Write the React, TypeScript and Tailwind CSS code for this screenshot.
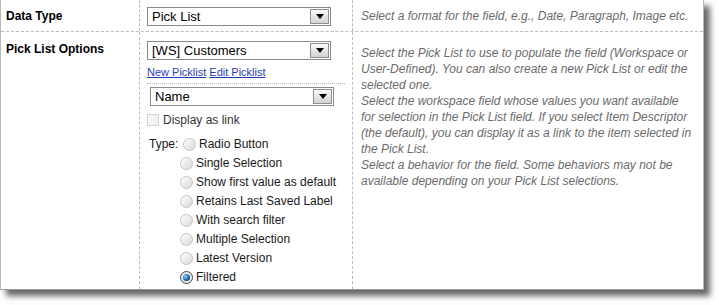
// Field options panel — Pick List settings (Data Type / Pick List Options)

const TYPES = [
  "Radio Button",
  "Single Selection",
  "Show first value as default",
  "Retains Last Saved Label",
  "With search filter",
  "Multiple Selection",
  "Latest Version",
  "Filtered",
];

function Select({ value, className = "" }: { value: string; className?: string }) {
  return (
    <div
      className={`flex h-[19px] w-[184px] items-center border border-[#8a8a8a] bg-white pl-[4px] pr-[1px] ${className}`}
    >
      <span className="flex-1 text-[13px] leading-none text-black">{value}</span>
      <span className="flex h-[15px] w-[19px] items-center justify-center border border-[#8f8f8f] bg-gradient-to-b from-[#fafafa] to-[#d2d2d2]">
        <svg width="8" height="5" viewBox="0 0 8 5">
          <path d="M0 0h8L4 5z" fill="#000" />
        </svg>
      </span>
    </div>
  );
}

function Radio({ checked }: { checked?: boolean }) {
  if (checked) {
    return (
      <span className="flex h-[13px] w-[13px] shrink-0 items-center justify-center rounded-full border border-[#4a4a4a] bg-[#e8e8e8]">
        <span className="h-[7px] w-[7px] rounded-full bg-[radial-gradient(circle_at_35%_35%,#8fd0ff,#0a5fa8_60%,#063a6b)]" />
      </span>
    );
  }
  return (
    <span className="h-[13px] w-[13px] shrink-0 rounded-full border border-[#c4c4c4] bg-gradient-to-br from-[#ffffff] to-[#d9d9d9]" />
  );
}

export default function App() {
  return (
    <div className="h-[305px] w-[719px] bg-white font-['Liberation_Sans',Arial,sans-serif]">
      <div className="w-[704px] border-x border-b border-x-[#b8b8b8] border-b-[#9a9a9a] bg-white shadow-[6px_6px_6px_rgba(0,0,0,0.6)]">
        {/* Row: Data Type */}
        <div className="flex h-[32px] border-b border-dashed border-[#bcbcbc]">
          <div className="w-[139px] shrink-0 border-r border-dashed border-[#bcbcbc] pl-[5px] pt-[9px] text-[12px] font-bold leading-[14px] text-black">
            Data Type
          </div>
          <div className="w-[213px] shrink-0 border-r border-dashed border-[#bcbcbc] pl-[7px] pt-[7px]">
            <Select value="Pick List" />
          </div>
          <div className="flex-1 pl-[8px] pt-[9px] text-[12px] italic leading-[14px] text-[#6b6b6b]">
            Select a format for the field, e.g., Date, Paragraph, Image etc.
          </div>
        </div>

        {/* Row: Pick List Options */}
        <div className="flex h-[257px]">
          <div className="w-[139px] shrink-0 border-r border-dashed border-[#bcbcbc] pl-[5px] pt-[10px] text-[12px] font-bold leading-[14px] text-black">
            Pick List Options
          </div>
          <div className="w-[213px] shrink-0 border-r border-dashed border-[#bcbcbc] pl-[7px] pt-[9px]">
            <Select value="[WS] Customers" />
            <div className="mt-[6px] flex gap-[3px] text-[11px] leading-[13px] text-[#1f3fae] underline">
              <span>New Picklist</span>
              <span>Edit Picklist</span>
            </div>
            <div className="mt-[4px] w-[198px] border-t border-dotted border-[#b0b0b0] pl-[3px] pt-[3px]">
              <Select value="Name" />
            </div>
            <div className="mt-[7px] flex items-center gap-[4px] text-[12px] leading-[14px] text-[#333]">
              <span className="h-[12px] w-[12px] border border-[#d2d2d2] bg-[#f3f3f3]" />
              <span>Display as link</span>
            </div>
            <div className="mt-[10px] flex text-[12px] leading-[19px] text-[#1a1a1a]">
              <span className="w-[33px] pl-[2px] leading-[14px]">Type:</span>
              <div className="-mt-[2px] flex flex-col">
                {TYPES.map((t, i) => (
                  <label
                    key={t}
                    className={`flex h-[19px] items-center gap-[3px] ${i === 0 ? "ml-[3px]" : ""}`}
                  >
                    <Radio checked={t === "Filtered"} />
                    <span>{t}</span>
                  </label>
                ))}
              </div>
            </div>
          </div>
          <div className="flex flex-1 flex-col pl-[8px] pr-[10px] pt-[13px] text-[12px] italic leading-[16px] text-[#6b6b6b]">
            <p>
              Select the Pick List to use to populate the field (Workspace or User-Defined). You can also create a new
              Pick List or edit the selected one.
            </p>
            <p>
              Select the workspace field whose values you want available for selection in the Pick List field. If you
              select Item Descriptor (the default), you can display it as a link to the item selected in the Pick List.
            </p>
            <p>
              Select a behavior for the field. Some behaviors may not be available depending on your Pick List
              selections.
            </p>
          </div>
        </div>
      </div>
    </div>
  );
}
